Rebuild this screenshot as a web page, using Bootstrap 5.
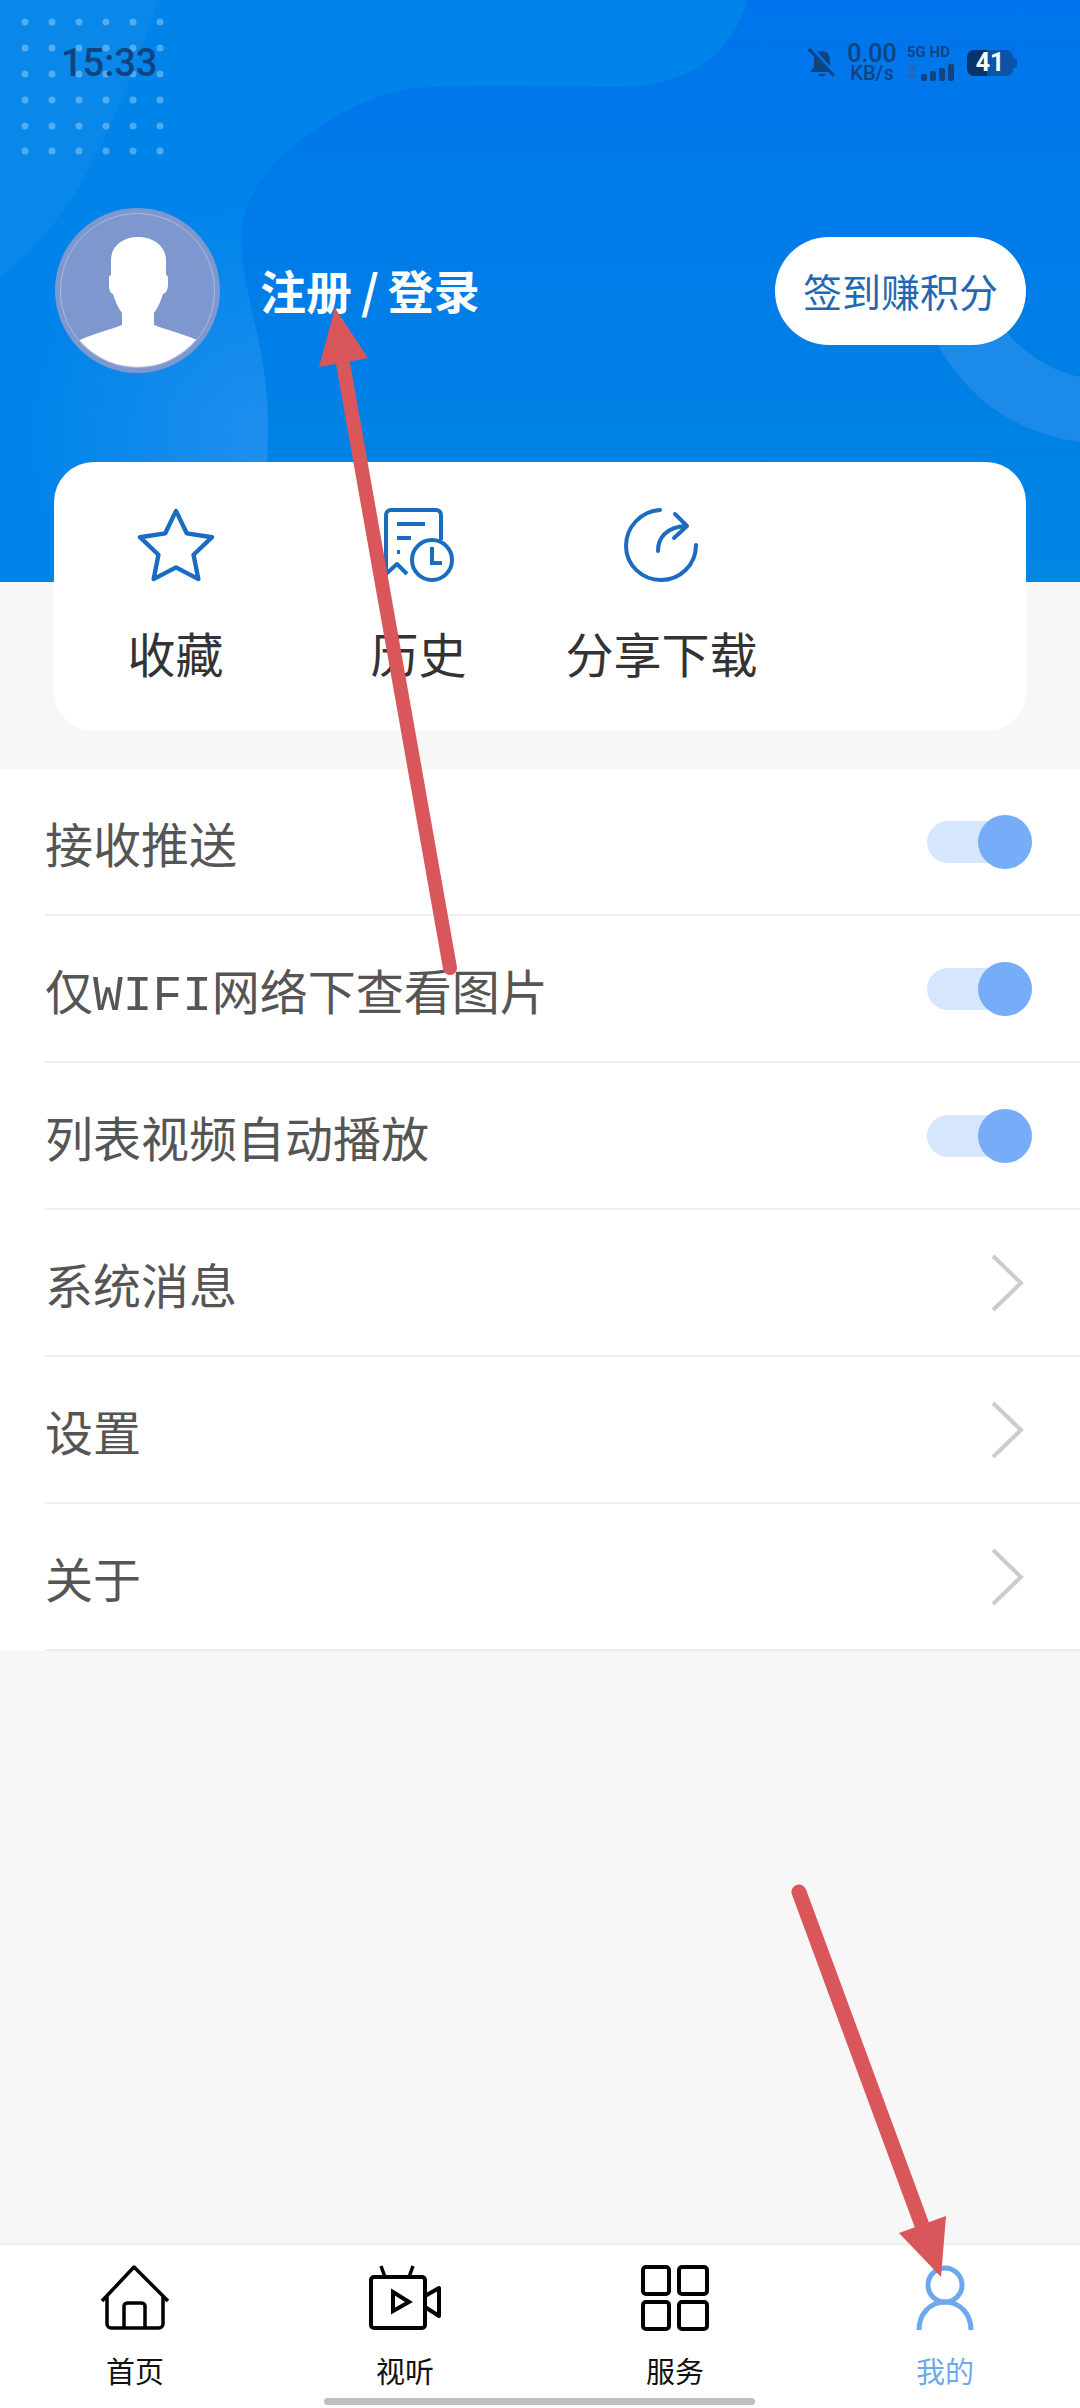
<!DOCTYPE html>
<html lang="zh">
<head>
    <meta charset="UTF-8">
    <meta name="viewport" content="width=device-width, initial-scale=1.0">
    <title>我的</title>
    <link href="https://cdn.jsdelivr.net/npm/bootstrap@5.3.0/dist/css/bootstrap.min.css" rel="stylesheet">
    <style>
        body { background: #f7f7f7; font-family: "Noto Sans CJK SC", "Liberation Sans", sans-serif; }
        .app-page { width: 1080px; height: 2408px; position: relative; overflow: hidden; }
        .top-area { height: 582px; position: relative; background: #0078e8; }
        .top-bg { position: absolute; left: 0; top: 0; }
        .top-inner { position: relative; }
        .status-row { height: 126px; padding: 32px 63px 0 61px; color: #0f4480; }
        .clock { font: 500 38px/62px Roboto, sans-serif; }
        .speed { width: 54px; margin-left: 9px; text-align: center; font-family: Roboto, sans-serif; font-weight: 500; }
        .speed b { display: block; font-weight: 500; font-size: 25px; line-height: 20px; }
        .speed i { display: block; font-style: normal; font-size: 20px; line-height: 18px; }
        .net-box { width: 50px; margin-left: 8px; font: 700 15px/15px Roboto, sans-serif; }
        .batt { width: 46px; height: 26px; margin: 0 4px 0 10px; border-radius: 7px; color: #fff; font: 700 25px/26px Roboto, sans-serif; text-align: center; background: linear-gradient(90deg, #08346c 43%, #0c54a8 43%); position: relative; }
        .batt::after { content: ""; position: absolute; right: -4px; top: 8px; width: 4px; height: 10px; border-radius: 0 3px 3px 0; background: #0c54a8; }
        .profile-row { padding: 82px 54px 0 55px; }
        .avatar-pic { width: 165px; height: 165px; display: block; }
        .login-text { margin-left: 40px; margin-top: -4px; color: #fff; font-size: 46px; font-weight: 700; line-height: 60px; }
        .slash-gap { margin: 0 9px; }
        .sign-btn { width: 251px; height: 108px; border-radius: 54px; background: #fff; color: #1f69b4; font-size: 39px; border: 0; padding: 0; }
        .quick-card { margin: -120px 54px 0 54px; height: 269px; width: 972px; border-radius: 40px; background: #fff; position: relative; }
        .quick-item { text-align: center; padding-top: 46px; color: #333; font-size: 48px; line-height: 60px; }
        .quick-item svg { display: block; margin: 0 auto 40px; height: 74px; }
        .setting-list { margin-top: 38px; background: #fff; }
        .setting-row { height: 147px; margin-left: 45px; border-bottom: 2px solid #eeeeee; color: #555; font-size: 48px; padding-right: 48px; }
        .mono-txt { font-family: "Liberation Mono", monospace; font-size: 49.5px; line-height: 1; }
        .switch-track { width: 105px; height: 42px; border-radius: 21px; background: #d6e6fc; position: relative; }
        .switch-knob { width: 54px; height: 54px; border-radius: 50%; background: #76acf8; position: absolute; right: 0; top: -6px; }
        .bottom-nav { position: absolute; left: 0; right: 0; bottom: 0; height: 165px; background: #fff; border-top: 2px solid #eeeeee; }
        .nav-item { width: 270px; text-align: center; color: #111; font-size: 29px; line-height: 40px; padding-top: 20px; }
        .nav-item svg { display: block; margin: 0 auto 19px; height: 66px; }
        .nav-on { color: #6ea8ec; }
        .home-bar { position: absolute; left: 324px; bottom: 3px; width: 431px; height: 7px; border-radius: 4px; background: #bfbfbf; }
        .mark-layer { position: absolute; left: 0; top: 0; z-index: 5; pointer-events: none; }
    </style>
</head>
<body>
<div class="app-page d-flex flex-column">

    <!-- blue header -->
    <div class="top-area">
        <svg class="top-bg" width="1080" height="582" viewBox="0 0 1080 582">
            <defs>
                <linearGradient id="baseFill" x1="0" y1="0" x2="0" y2="1"><stop offset="0" stop-color="#0074ec"/><stop offset="1" stop-color="#0086e3"/></linearGradient>
                <radialGradient id="glowFill" gradientUnits="userSpaceOnUse" cx="265" cy="440" r="240"><stop offset="0" stop-color="#1e8fee"/><stop offset="1" stop-color="#1e8fee" stop-opacity="0"/></radialGradient>
            </defs>
            <rect width="1080" height="582" fill="url(#baseFill)"/>
            <path id="blobShape" d="M747 0C735 50 690 87 620 87C560 87 480 84 413 88C340 100 245 165 241 233C240 290 267 340 268 420C268 480 262 540 255 582H0V0Z" fill="#0084ea"/>
            <path d="M747 0C735 50 690 87 620 87C560 87 480 84 413 88C340 100 245 165 241 233C240 290 267 340 268 420C268 480 262 540 255 582H0V0Z" fill="url(#glowFill)"/>
            <path d="M158 0C135 70 110 130 93 160C70 210 30 255 0 277V0Z" fill="#fff" opacity=".04"/>
            <path d="M935 340C965 395 1010 432 1080 442V377C1050 370 1025 355 1005 330Z" fill="#1c8ae8"/>
            <g fill="#fff" opacity=".3">
                <circle cx="25" cy="22" r="3.5"/><circle cx="52" cy="22" r="3.5"/><circle cx="79" cy="22" r="3.5"/><circle cx="106" cy="22" r="3.5"/><circle cx="133" cy="22" r="3.5"/><circle cx="160" cy="22" r="3.5"/>
                <circle cx="25" cy="48" r="3.5"/><circle cx="52" cy="48" r="3.5"/><circle cx="79" cy="48" r="3.5"/><circle cx="106" cy="48" r="3.5"/><circle cx="133" cy="48" r="3.5"/><circle cx="160" cy="48" r="3.5"/>
                <circle cx="25" cy="74" r="3.5"/><circle cx="52" cy="74" r="3.5"/><circle cx="79" cy="74" r="3.5"/><circle cx="106" cy="74" r="3.5"/><circle cx="133" cy="74" r="3.5"/><circle cx="160" cy="74" r="3.5"/>
                <circle cx="25" cy="100" r="3.5"/><circle cx="52" cy="100" r="3.5"/><circle cx="79" cy="100" r="3.5"/><circle cx="106" cy="100" r="3.5"/><circle cx="133" cy="100" r="3.5"/><circle cx="160" cy="100" r="3.5"/>
                <circle cx="25" cy="126" r="3.5"/><circle cx="52" cy="126" r="3.5"/><circle cx="79" cy="126" r="3.5"/><circle cx="106" cy="126" r="3.5"/><circle cx="133" cy="126" r="3.5"/><circle cx="160" cy="126" r="3.5"/>
                <circle cx="25" cy="151" r="3.5"/><circle cx="52" cy="151" r="3.5"/><circle cx="79" cy="151" r="3.5"/><circle cx="106" cy="151" r="3.5"/><circle cx="133" cy="151" r="3.5"/><circle cx="160" cy="151" r="3.5"/>
            </g>
        </svg>
        <div class="top-inner">
            <div class="status-row d-flex align-items-start">
                <div class="clock">15:33</div>
                <div class="ms-auto d-flex align-items-center" style="height:62px">
                    <svg width="28" height="30" viewBox="0 0 28 30"><path d="M14 3C8 3 6 8 6 13V19L2 24H26L22 19V13C22 8 20 3 14 3ZM10 26C11 29 17 29 18 26Z" fill="#0f4480"/><path d="M3 1L28 28" stroke="#0076ea" stroke-width="5"/><path d="M1 1L26 28" stroke="#0f4480" stroke-width="3"/></svg>
                    <div class="speed"><b>0.00</b><i>KB/s</i></div>
                    <div class="net-box">
                        <div>5G HD</div>
                        <svg class="d-block mt-1" width="50" height="18" viewBox="0 0 50 18"><path d="M5 0L10 6H0ZM5 17L0 10H10Z" fill="#2a64ae"/><rect x="14" y="10" width="6" height="7" rx="2" fill="#0f4480"/><rect x="23" y="7" width="6" height="10" rx="2" fill="#0f4480"/><rect x="32" y="4" width="6" height="13" rx="2" fill="#0f4480"/><rect x="41" y="0" width="6" height="17" rx="2" fill="#0f4480"/></svg>
                    </div>
                    <div class="batt">41</div>
                </div>
            </div>
            <div class="profile-row d-flex align-items-center">
                <svg class="avatar-pic" viewBox="0 0 165 165">
                    <defs><clipPath id="avatarClip"><circle cx="82.5" cy="82.5" r="76.5"/></clipPath></defs>
                    <circle cx="82.5" cy="82.5" r="82.5" fill="#7f97cf"/>
                    <circle cx="82.5" cy="82.5" r="77" fill="none" stroke="#a9b9e0" stroke-width="1"/>
                    <path clip-path="url(#avatarClip)" d="M25 132C40 125 55 122 67 117V105C62 98 60 92 58 86C55 85 54 82 54 76V70C54 68 55 67 56 67V52C56 38 68 29 83 29C98 29 111 38 111 52V67C112 67 113 68 113 70V76C113 82 111 85 108 86C106 92 104 98 99 105V117C111 122 126 125 142 132L150 170H18Z" fill="#fff"/>
                </svg>
                <div class="login-text">注册<span class="slash-gap">/</span>登录</div>
                <button class="sign-btn ms-auto" type="button">签到赚积分</button>
            </div>
        </div>
    </div>

    <!-- favourites, history, share -->
    <div class="quick-card row g-0">
        <div class="col-3 quick-item">
            <svg width="80" height="74" viewBox="0 0 80 76"><path d="M40 3L51 26L77 30L58 48L63 73L40 61L17 73L22 48L3 30L29 26Z" fill="none" stroke="#1a6cc0" stroke-width="4.5" stroke-linejoin="round"/></svg>
            收藏
        </div>
        <div class="col-3 quick-item">
            <svg width="72" height="74" viewBox="0 0 72 74"><path d="M3 66V7C3 4 5 2 8 2H53C56 2 58 4 58 7V32M3 66L14 56L24 66" fill="none" stroke="#1a6cc0" stroke-width="4" stroke-linejoin="round"/><path d="M14 16H42M14 30H28M14 44H17" fill="none" stroke="#1a6cc0" stroke-width="4"/><circle cx="49" cy="52" r="20" fill="#fff" stroke="#1a6cc0" stroke-width="4"/><path d="M49 39V55H59" fill="none" stroke="#1a6cc0" stroke-width="4"/></svg>
            历史
        </div>
        <div class="col-3 quick-item">
            <svg width="76" height="74" viewBox="0 0 76 74"><path d="M36 2C17 3 2 19 2 38C2 57 18 72 37 72C56 72 72 57 72 37" fill="none" stroke="#1a6cc0" stroke-width="4" stroke-linecap="round"/><path d="M34 43C34 30 42 19 62 18M51 6L63 18L50 30" fill="none" stroke="#1a6cc0" stroke-width="4" stroke-linecap="round" stroke-linejoin="round"/></svg>
            分享下载
        </div>
    </div>

    <!-- settings -->
    <div class="setting-list">
        <div class="setting-row d-flex align-items-center justify-content-between"><span>接收推送</span><div class="switch-track"><div class="switch-knob"></div></div></div>
        <div class="setting-row d-flex align-items-center justify-content-between"><span>仅<span class="mono-txt">WIFI</span>网络下查看图片</span><div class="switch-track"><div class="switch-knob"></div></div></div>
        <div class="setting-row d-flex align-items-center justify-content-between"><span>列表视频自动播放</span><div class="switch-track"><div class="switch-knob"></div></div></div>
        <div class="setting-row d-flex align-items-center justify-content-between"><span>系统消息</span><svg class="me-2" width="34" height="60" viewBox="0 0 34 60"><path d="M3 3L31 30L3 57" fill="none" stroke="#cccccc" stroke-width="4"/></svg></div>
        <div class="setting-row d-flex align-items-center justify-content-between"><span>设置</span><svg class="me-2" width="34" height="60" viewBox="0 0 34 60"><path d="M3 3L31 30L3 57" fill="none" stroke="#cccccc" stroke-width="4"/></svg></div>
        <div class="setting-row d-flex align-items-center justify-content-between"><span>关于</span><svg class="me-2" width="34" height="60" viewBox="0 0 34 60"><path d="M3 3L31 30L3 57" fill="none" stroke="#cccccc" stroke-width="4"/></svg></div>
    </div>

    <!-- tab bar -->
    <div class="bottom-nav d-flex">
        <div class="nav-item">
            <svg width="70" height="66" viewBox="0 0 70 66"><path d="M2 36L34 2L68 36M7 31V59C7 61 9 63 11 63H59C61 63 63 61 63 59V31M24 63V41C24 39 26 38 28 38H41C43 38 45 39 45 41V63" fill="none" stroke="#000" stroke-width="3.5" stroke-linejoin="round"/></svg>
            首页
        </div>
        <div class="nav-item">
            <svg width="72" height="66" viewBox="0 0 72 66"><path d="M12 1L16 12M44 1L40 12" stroke="#000" stroke-width="3.5"/><rect x="2" y="12" width="54" height="51" rx="3" fill="none" stroke="#000" stroke-width="4"/><path d="M24 27L40 37L24 46Z" fill="none" stroke="#000" stroke-width="4"/><path d="M56 31L70 23V51L56 42" fill="none" stroke="#000" stroke-width="4" stroke-linejoin="round"/></svg>
            视听
        </div>
        <div class="nav-item">
            <svg width="68" height="66" viewBox="0 0 68 66"><g fill="none" stroke="#000" stroke-width="4"><rect x="2" y="2" width="26" height="27" rx="3"/><rect x="38" y="2" width="28" height="27" rx="3"/><rect x="2" y="37" width="26" height="27" rx="3"/><rect x="38" y="37" width="28" height="27" rx="3"/></g></svg>
            服务
        </div>
        <div class="nav-item nav-on">
            <svg width="58" height="66" viewBox="0 0 58 66"><g fill="none" stroke="#6ea8ec" stroke-width="5"><ellipse cx="29" cy="20" rx="17" ry="17"/><path d="M3 65C3 49 14 37 29 37C44 37 55 49 55 65"/></g></svg>
            我的
        </div>
        <div class="home-bar"></div>
    </div>

    <!-- red marks drawn on the screenshot -->
    <svg class="mark-layer" width="1080" height="2408" viewBox="0 0 1080 2408">
        <path d="M450 968L341 352" stroke="#d9565b" stroke-width="14" stroke-linecap="round" fill="none"/>
        <path d="M335 308L319 367L368 358Z" fill="#d9565b"/>
        <path d="M799 1892L923 2228" stroke="#d9565b" stroke-width="15" stroke-linecap="round" fill="none"/>
        <path d="M941 2277L899 2233L946 2216Z" fill="#d9565b"/>
    </svg>
</div>
<script src="https://cdn.jsdelivr.net/npm/bootstrap@5.3.0/dist/js/bootstrap.bundle.min.js"></script>
</body>
</html>
